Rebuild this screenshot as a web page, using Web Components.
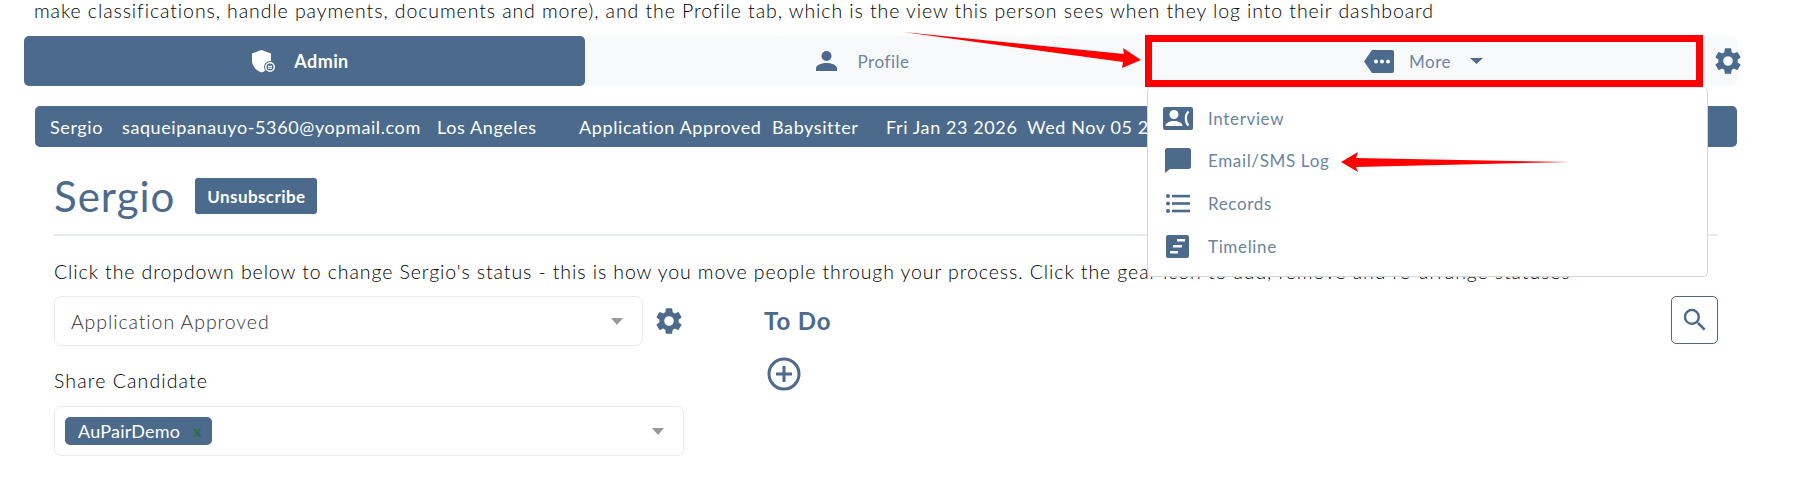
<!doctype html>
<html><head><meta charset="utf-8"><style>
html,body{margin:0;padding:0;background:#fff;overflow:hidden}
body{font-family:"Lato","Noto Sans",sans-serif;width:1793px;height:478px}
</style></head><body>
<template id="tpl-page">
<style>
:host{display:block;position:relative;width:1793px;height:478px;overflow:hidden;color:#000;font-size:18px}
.intro{height:36px;padding:1px 0 0 34px;box-sizing:border-box;line-height:20px;font-size:19.5px;font-weight:300;letter-spacing:.91px;white-space:nowrap}
</style>
<div class="intro"><slot name="intro"></slot></div>
<slot></slot>
</template>
<template id="tpl-tabs">
<style>
:host{display:flex;align-items:stretch;margin:0 56px 0 24px;height:50px;background:#f8f9fa;border-radius:5px;position:relative}
::slotted(svg){flex:none;align-self:center;margin-left:5px}
</style>
<slot></slot>
</template>
<template id="tpl-tab">
<style>
:host{flex:0 0 561px;box-sizing:border-box;display:flex;align-items:center;justify-content:center;color:#6c85a2;font-size:17px;letter-spacing:.55px;border-radius:5px}
:host([active]){background:#4b6a8c;color:#fff;font-weight:700;font-size:18px;letter-spacing:.4px}
::slotted(svg){flex:none;display:block}
</style><slot></slot>
</template>
<template id="tpl-info">
<style>
:host{display:flex;align-items:center;margin:20px 56px 0 35px;height:41px;background:#4b6a8c;color:#fff;border-radius:5px;font-size:18px;letter-spacing:.6px;white-space:nowrap;padding-left:15px;box-sizing:border-box;overflow:hidden}
::slotted(span){flex:none}
</style><slot></slot>
</template>
<template id="tpl-main">
<style>
:host{display:block;margin:0 75px 0 54px}
.head{display:flex;align-items:center;gap:20px;height:89px;border-bottom:2px solid #e9ecef;box-sizing:border-box;padding-top:11px}
h1{margin:0;font-size:42px;font-weight:400;color:#4b6a8c;letter-spacing:1px;line-height:48px}
.btn{background:#4b6a8c;color:#fff;font-weight:700;font-size:17px;letter-spacing:.4px;width:122px;height:36px;display:flex;align-items:center;justify-content:center;border-radius:3px}
.hint{margin-top:26px;height:20px;line-height:20px;font-size:19.5px;font-weight:300;letter-spacing:.91px;white-space:nowrap}
.cols{display:flex;margin-top:14px}
.left{flex:0 0 710px}
.right{flex:1;display:flex;justify-content:space-between;align-items:flex-start}
.row{display:flex;align-items:center;gap:10px}
.label{margin-top:24px;height:22px;line-height:22px;font-size:19.5px;font-weight:300;letter-spacing:1.1px}
.todo{font-size:24px;font-weight:700;color:#4b6a8c;line-height:50px;letter-spacing:.9px}
.search{width:47px;height:48px;border:1.5px solid #4b6a8c;border-radius:5px;box-sizing:border-box;display:flex;align-items:center;justify-content:center}
.plus{display:block;margin:11px 0 0 3px}
</style>
<div class="head"><h1>Sergio</h1><div class="btn">Unsubscribe</div></div>
<div class="hint">Click the dropdown below to change Sergio's status - this is how you move people through your process. Click the gear icon to add, remove and re-arrange statuses</div>
<div class="cols">
<div class="left">
<div class="row"><x-select style="width:589px">Application Approved</x-select>
<svg width="32" height="32" viewBox="0 0 24 24" fill="#4b6a8c"><path d="M19.14 12.94c.04-.3.06-.61.06-.94 0-.32-.02-.64-.07-.94l2.03-1.58a.49.49 0 0 0 .12-.61l-1.92-3.32a.49.49 0 0 0-.59-.22l-2.39.96c-.5-.38-1.03-.7-1.62-.94l-.36-2.54a.48.48 0 0 0-.48-.41h-3.84a.48.48 0 0 0-.47.41l-.36 2.54c-.59.24-1.13.57-1.62.94l-2.39-.96a.48.48 0 0 0-.59.22L2.74 8.87a.47.47 0 0 0 .12.61l2.03 1.58c-.05.3-.09.63-.09.94s.02.64.07.94l-2.03 1.58a.49.49 0 0 0-.12.61l1.92 3.32c.12.22.37.29.59.22l2.39-.96c.5.38 1.03.7 1.62.94l.36 2.54c.05.24.24.41.48.41h3.84c.24 0 .44-.17.47-.41l.36-2.54c.59-.24 1.13-.56 1.62-.94l2.39.96c.22.08.47 0 .59-.22l1.92-3.32a.47.47 0 0 0-.12-.61l-2.01-1.58zM12 15.6A3.6 3.6 0 1 1 12 8.4a3.6 3.6 0 0 1 0 7.2z"/></svg></div>
<div class="label">Share Candidate</div>
<x-select style="width:630px;margin-top:14px" multi><x-chip>AuPairDemo</x-chip></x-select>
</div>
<div class="right">
<div><div class="todo">To Do</div>
<svg class="plus" width="34" height="34" viewBox="0 0 34 34" fill="none" stroke="#4b6a8c" stroke-width="3"><circle cx="17" cy="17" r="15"/><path d="M17 9v16M9 17h16"/></svg></div>
<div class="search"><svg width="30" height="30" viewBox="0 0 24 24" fill="#4b6a8c"><path d="M15.5 14h-.79l-.28-.27A6.47 6.47 0 0 0 16 9.5 6.5 6.5 0 1 0 9.5 16c1.61 0 3.09-.59 4.23-1.57l.27.28v.79l5 4.99L20.49 19l-4.99-5zm-6 0C7.01 14 5 11.99 5 9.5S7.01 5 9.5 5 14 7.01 14 9.5 11.99 14 9.5 14z"/></svg></div>
</div>
</div>
</template>
<template id="tpl-select">
<style>
:host{display:flex;align-items:center;height:50px;box-sizing:border-box;border:1.5px solid #e9ecef;border-radius:7px;padding:0 0 0 16px;color:#333;font-size:19.5px;font-weight:300;letter-spacing:.91px;position:relative}
:host([multi]){padding-left:10px}
.a{position:absolute;right:19px;top:21px;width:0;height:0;border:6px solid transparent;border-top:7px solid #999;border-bottom:0}
</style><slot></slot><span class="a"></span>
</template>
<template id="tpl-chip">
<style>
:host{display:flex;align-items:center;width:147px;height:28px;background:#4b6a8c;color:#fff;border-radius:5px;font-size:18px;font-weight:400;letter-spacing:.2px;padding-left:13px;box-sizing:border-box;gap:13px}
.x{color:#2a6a48;font-weight:700;font-size:15px}
</style><slot></slot><span class="x">x</span>
</template>
<template id="tpl-menu">
<style>
:host{display:block;position:absolute;left:1147px;top:87px;width:561px;height:190px;box-sizing:border-box;background:#fff;border:1px solid #d4d6d9;border-top-color:#e9ecef;border-radius:5px;padding:9px 0 0 0}
</style><slot></slot>
</template>
<template id="tpl-item">
<style>
:host{display:flex;align-items:center;height:42.6px;color:#6c85a2;font-size:17px;letter-spacing:.65px;padding-left:14px}
.i{width:31px;height:30px;display:flex;align-items:center;justify-content:center;margin-right:15px}
::slotted(svg){display:block}
</style><span class="i"><slot name="icon"></slot></span><slot></slot>
</template>

<x-page>
<span slot="intro">make classifications, handle payments, documents and more), and the Profile tab, which is the view this person sees when they log into their dashboard</span>
<x-tabs>
<x-tab active style="padding-right:8px"><svg width="24" height="23" viewBox="0 0 24 23" style="margin-right:18px"><path fill="#fff" d="M9.500 0l9.500 3.500v7c0 5.500-4 10-9.500 12C4 20.500 0 16 0 10.500v-7z"/><circle cx="18" cy="17" r="6" fill="#4b6a8c"/><circle cx="18" cy="17" r="5" fill="#fff"/><circle cx="18" cy="17" r="3.500" fill="#4b6a8c"/><path stroke="#fff" stroke-width="1.200" d="M16 16.400h4M16 18.200h4"/></svg><span>Admin</span></x-tab>
<x-tab style="padding-right:5px"><svg width="21" height="20" viewBox="0 0 21 20" fill="#4b6a8c" style="margin-right:20px"><path d="M10.500 10a5 5 0 1 0 0-10 5 5 0 0 0 0 10zM10.500 12c-4 0-10.500 1.800-10.500 5.300V20h21v-2.700c0-3.500-6.500-5.300-10.500-5.300z"/></svg><span>Profile</span></x-tab>
<x-tab style="padding-right:6px"><svg width="30" height="23" viewBox="0 0 30 23" style="margin-right:15px"><path fill="#4b6a8c" d="M8 0h20a2 2 0 0 1 2 2v19a2 2 0 0 1-2 2H8L0 11.500z"/><circle cx="12" cy="11.500" r="2" fill="#fff"/><circle cx="18" cy="11.500" r="2" fill="#fff"/><circle cx="24" cy="11.500" r="2" fill="#fff"/></svg><span>More</span><svg width="13" height="6" viewBox="0 0 13 6" style="margin-left:19px"><path fill="#4b6a8c" d="M0 0h13L6.500 6z"/></svg></x-tab>
<svg width="32" height="32" viewBox="0 0 24 24" fill="#4b6a8c"><path d="M19.14 12.94c.04-.3.06-.61.06-.94 0-.32-.02-.64-.07-.94l2.03-1.58a.49.49 0 0 0 .12-.61l-1.92-3.32a.49.49 0 0 0-.59-.22l-2.39.96c-.5-.38-1.03-.7-1.62-.94l-.36-2.54a.48.48 0 0 0-.48-.41h-3.84a.48.48 0 0 0-.47.41l-.36 2.54c-.59.24-1.13.57-1.62.94l-2.39-.96a.48.48 0 0 0-.59.22L2.74 8.87a.47.47 0 0 0 .12.61l2.03 1.58c-.05.3-.09.63-.09.94s.02.64.07.94l-2.03 1.58a.49.49 0 0 0-.12.61l1.92 3.32c.12.22.37.29.59.22l2.39-.96c.5.38 1.03.7 1.62.94l.36 2.54c.05.24.24.41.48.41h3.84c.24 0 .44-.17.47-.41l.36-2.54c.59-.24 1.13-.56 1.62-.94l2.39.96c.22.08.47 0 .59-.22l1.92-3.32a.47.47 0 0 0-.12-.61l-2.01-1.58zM12 15.6A3.6 3.6 0 1 1 12 8.4a3.6 3.6 0 0 1 0 7.2z"/></svg>
</x-tabs>
<x-info><span style="width:72px">Sergio</span><span style="width:315px">saqueipanauyo-5360@yopmail.com</span><span style="width:142px">Los Angeles</span><span style="width:193px">Application Approved</span><span style="width:114px">Babysitter</span><span style="width:141px">Fri Jan 23 2026</span><span>Wed Nov 05 2025</span></x-info>
<x-main></x-main>
<x-menu>
<x-item><svg slot="icon" width="30" height="23" viewBox="0 0 30 23"><rect width="30" height="23" rx="2" fill="#4b6a8c"/><circle cx="11" cy="7.500" r="4.500" fill="#fff"/><path fill="#fff" d="M2.500 19c0-3.500 4.500-5 8.500-5s8.500 1.500 8.500 5z"/><path fill="none" stroke="#fff" stroke-width="2.200" d="M25.500 4.500c-3.500 3-3.500 11 0 14"/></svg>Interview</x-item>
<x-item><svg slot="icon" width="26" height="25" viewBox="0 0 26 25"><path fill="#4b6a8c" d="M2.500 0h21A2.500 2.500 0 0 1 26 2.500v16a2.500 2.500 0 0 1-2.500 2.500H5l-5 4V2.500A2.500 2.500 0 0 1 2.500 0z"/></svg>Email/SMS Log</x-item>
<x-item><svg slot="icon" width="24" height="19" viewBox="0 0 24 19" fill="#4b6a8c"><circle cx="2" cy="2" r="2"/><circle cx="2" cy="9.500" r="2"/><circle cx="2" cy="17" r="2"/><rect x="6" y=".8" width="18" height="2.600"/><rect x="6" y="8.200" width="18" height="2.600"/><rect x="6" y="15.700" width="18" height="2.600"/></svg>Records</x-item>
<x-item><svg slot="icon" width="23" height="23" viewBox="0 0 23 23"><rect width="23" height="23" rx="2" fill="#4b6a8c"/><path fill="#fff" d="M11 4h8v2.500h-8zM7 10h9v2.500H7zM4 16h8v2.500H4z"/></svg>Timeline</x-item>
</x-menu>
<x-overlay></x-overlay>
</x-page>
<template id="tpl-overlay">
<style>:host{display:block;position:absolute;left:0;top:0;width:1793px;height:478px;pointer-events:none}
.box{position:absolute;left:1145px;top:35px;width:558px;height:52px;box-sizing:border-box;border:7px solid #f00}
svg{position:absolute;left:0;top:0}
</style>
<div class="box"></div>
<svg width="1793" height="478"><path fill="#f00" d="M903 32 1124 54 1123 48 1141 60 1122 68 1123 62z"/><path fill="#f00" d="M1341 162 1358 152 1356 158 1570 162 1356 167 1358 172z"/></svg>
</template>
<script>
function def(name,id){customElements.define(name,class extends HTMLElement{constructor(){super();this.attachShadow({mode:'open'}).appendChild(document.getElementById(id).content.cloneNode(true));}});}
[['x-page','tpl-page'],['x-tabs','tpl-tabs'],['x-tab','tpl-tab'],['x-info','tpl-info'],['x-main','tpl-main'],['x-select','tpl-select'],['x-chip','tpl-chip'],['x-menu','tpl-menu'],['x-item','tpl-item'],['x-overlay','tpl-overlay']].forEach(a=>def(a[0],a[1]));
</script>
</body></html>
